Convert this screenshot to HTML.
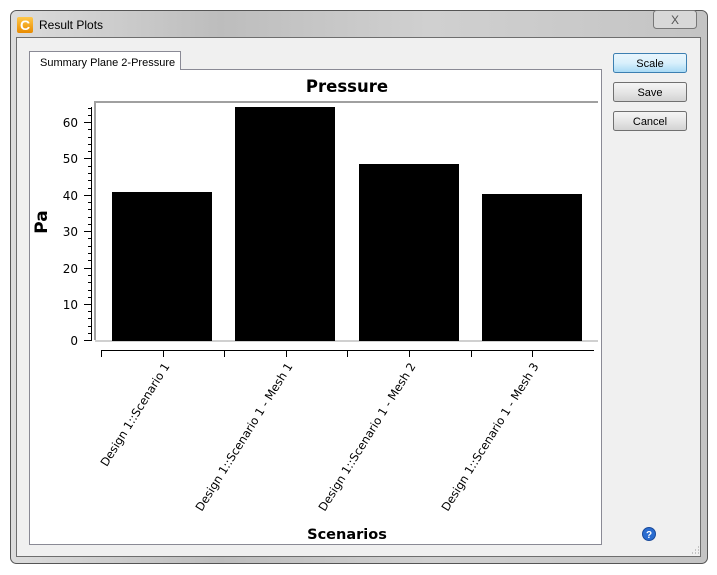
<!DOCTYPE html>
<html><head><meta charset="utf-8"><style>
html,body{margin:0;padding:0;width:717px;height:575px;background:#fff;overflow:hidden;font-family:"Liberation Sans",sans-serif}
</style></head><body>
<svg width="717" height="575" viewBox="0 0 717 575" xmlns="http://www.w3.org/2000/svg" style="position:absolute;left:0;top:0">
<defs>
<linearGradient id="tb" x1="0" x2="1" y1="0" y2="0">
<stop offset="0" stop-color="#dcdcdc"/><stop offset="0.3" stop-color="#bdbdbd"/><stop offset="0.6" stop-color="#d0d0d0"/><stop offset="1" stop-color="#c4c4c4"/>
</linearGradient>
<linearGradient id="btn" x1="0" x2="0" y1="0" y2="1"><stop offset="0" stop-color="#f6f6f6"/><stop offset="0.5" stop-color="#e6e6e6"/><stop offset="1" stop-color="#d2d2d2"/></linearGradient>
<linearGradient id="btnb" x1="0" x2="0" y1="0" y2="1"><stop offset="0" stop-color="#eaf6fd"/><stop offset="0.5" stop-color="#d9f0fc"/><stop offset="1" stop-color="#a7d9f5"/></linearGradient>
<linearGradient id="ic" x1="0" x2="0" y1="0" y2="1"><stop offset="0" stop-color="#ffc84a"/><stop offset="1" stop-color="#e88a00"/></linearGradient>
</defs>
<rect x="10.5" y="10.5" width="697" height="553" rx="6" fill="url(#tb)" stroke="#555"/>
<rect x="16.5" y="37.5" width="684" height="519" fill="#f0f0f0" stroke="#6e6e6e"/>
<rect x="17" y="17" width="16" height="16" rx="2" fill="url(#ic)"/>
<text x="25" y="30" font-size="14" font-weight="bold" fill="#fff" text-anchor="middle">C</text>
<text x="39" y="29" font-size="12" fill="#000">Result Plots</text>
<rect x="653.5" y="10.5" width="43" height="18" rx="3" fill="#d8d8d8" stroke="#777"/>
<text x="675" y="24" font-size="12" fill="#555" text-anchor="middle">X</text>
<rect x="29.5" y="69.5" width="572" height="475" fill="#fff" stroke="#8a8a95"/>
<path d="M29.5 70 V51.5 H180.5 V70" fill="#fff" stroke="#8a8a95"/>
<rect x="30" y="69" width="150" height="2" fill="#fff"/>
<text x="40" y="66" font-size="11" fill="#000">Summary Plane 2-Pressure</text>
<text x="347" y="92" font-size="16.5" font-weight="bold" text-anchor="middle" font-family="DejaVu Sans,sans-serif">Pressure</text>
<path d="M95 340 V102 H598" fill="none" stroke="#a0a0a0" stroke-width="2"/>
<line x1="95" y1="341" x2="598" y2="341" stroke="#a0a0a0" stroke-width="1"/>
<rect x="112" y="192" width="100" height="149" fill="#000"/>
<rect x="235" y="107" width="100" height="234" fill="#000"/>
<rect x="359" y="164" width="100" height="177" fill="#000"/>
<rect x="482" y="194" width="100" height="147" fill="#000"/>
<g stroke="#000" stroke-width="1">
<line x1="91.5" y1="107" x2="91.5" y2="341"/>
<line x1="84" y1="340.5" x2="91" y2="340.5"/>
<line x1="84" y1="304.5" x2="91" y2="304.5"/>
<line x1="84" y1="268.5" x2="91" y2="268.5"/>
<line x1="84" y1="231.5" x2="91" y2="231.5"/>
<line x1="84" y1="195.5" x2="91" y2="195.5"/>
<line x1="84" y1="158.5" x2="91" y2="158.5"/>
<line x1="84" y1="122.5" x2="91" y2="122.5"/>
</g>
<path stroke="#000" d="M88 333.5h3M88 326.5h3M88 318.5h3M88 311.5h3M88 297.5h3M88 290.5h3M88 282.5h3M88 275.5h3M88 260.5h3M88 253.5h3M88 246.5h3M88 238.5h3M88 224.5h3M88 217.5h3M88 209.5h3M88 202.5h3M88 188.5h3M88 180.5h3M88 173.5h3M88 166.5h3M88 151.5h3M88 144.5h3M88 137.5h3M88 129.5h3M88 115.5h3M88 108.5h3"/>
<g font-size="12" text-anchor="end" font-family="DejaVu Sans,sans-serif" fill="#000">
<text x="78" y="345">0</text><text x="78" y="309">10</text><text x="78" y="273">20</text><text x="78" y="236">30</text><text x="78" y="200">40</text><text x="78" y="163">50</text><text x="78" y="127">60</text>
</g>
<text transform="translate(47,222) rotate(-90)" font-size="17" font-weight="bold" text-anchor="middle" font-family="DejaVu Sans,sans-serif">Pa</text>
<path stroke="#000" fill="none" d="M101 350.5H594M101.5 350v7M163.5 350v7M224.5 350v7M286.5 350v7M347.5 350v7M409.5 350v7M471.5 350v7M532.5 350v7"/>
<g font-size="11.5" text-anchor="end" font-family="DejaVu Sans,sans-serif" fill="#000">
<text transform="translate(170,366) rotate(-58)">Design 1::Scenario 1</text>
<text transform="translate(293,366) rotate(-58)">Design 1::Scenario 1 - Mesh 1</text>
<text transform="translate(416,366) rotate(-58)">Design 1::Scenario 1 - Mesh 2</text>
<text transform="translate(539,366) rotate(-58)">Design 1::Scenario 1 - Mesh 3</text>
</g>
<text x="347" y="539" font-size="14.5" font-weight="bold" text-anchor="middle" font-family="DejaVu Sans,sans-serif">Scenarios</text>
<rect x="613.5" y="53.5" width="73" height="19" rx="2" fill="url(#btnb)" stroke="#3c7fb1"/>
<text x="650" y="67" font-size="11" text-anchor="middle">Scale</text>
<rect x="613.5" y="82.5" width="73" height="19" rx="2" fill="url(#btn)" stroke="#707070"/>
<text x="650" y="96" font-size="11" text-anchor="middle">Save</text>
<rect x="613.5" y="111.5" width="73" height="19" rx="2" fill="url(#btn)" stroke="#707070"/>
<text x="650" y="125" font-size="11" text-anchor="middle">Cancel</text>
<circle cx="649" cy="534" r="6.5" fill="#2a6cd0" stroke="#1a4a9a"/>
<text x="649" y="538" font-size="10" font-weight="bold" fill="#fff" text-anchor="middle">?</text>
<path d="M692 553h1M695 553h1M695 550h1M698 553h1M698 550h1M698 547h1" stroke="#999"/>
</svg>
</body></html>
